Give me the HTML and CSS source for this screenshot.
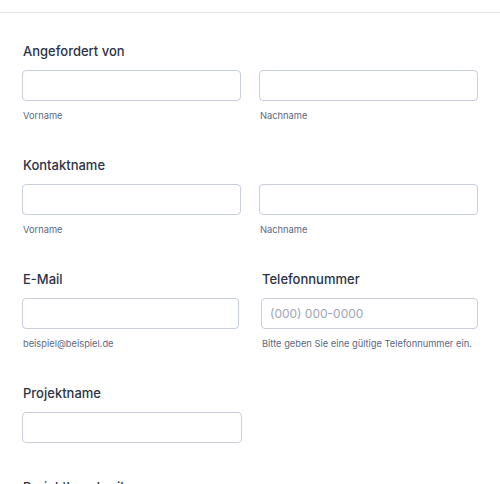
FILE: index.html
```html
<!DOCTYPE html>
<html lang="de">
<head>
<meta charset="utf-8">
<link rel="stylesheet" href="styles.css">
</head>
<body>
<div class="header-line"></div>
<form class="form">
  <div class="field">
    <div class="label">Angefordert von</div>
    <div class="row">
      <div class="col"><input class="input" type="text"><div class="sub">Vorname</div></div>
      <div class="col"><input class="input" type="text"><div class="sub">Nachname</div></div>
    </div>
  </div>
  <div class="field">
    <div class="label">Kontaktname</div>
    <div class="row">
      <div class="col"><input class="input" type="text"><div class="sub">Vorname</div></div>
      <div class="col"><input class="input" type="text"><div class="sub">Nachname</div></div>
    </div>
  </div>
  <div class="row row-wide">
    <div class="col">
      <div class="label">E-Mail</div>
      <input class="input" type="text">
      <div class="sub">beispiel@beispiel.de</div>
    </div>
    <div class="col">
      <div class="label">Telefonnummer</div>
      <input class="input" type="text" placeholder="(000) 000-0000">
      <div class="sub">Bitte geben Sie eine gültige Telefonnummer ein.</div>
    </div>
  </div>
  <div class="field field-single">
    <div class="label">Projektname</div>
    <input class="input input-half" type="text">
  </div>
  <div class="field">
    <div class="label">Projektbeschreibung</div>
  </div>
</form>
</body>
</html>
```
FILE: styles.css
```css
html, body {
  margin: 0;
  padding: 0;
  background: #ffffff;
  font-family: Inter, "Noto Sans", sans-serif;
  color: #2c3345;
}
.header-line {
  height: 12px;
  border-bottom: 1px solid #e1e2ea;
}
.form {
  padding: 28px 22px 0 22px;
}
.field {
  margin-bottom: 32px;
}
.row {
  display: grid;
  grid-template-columns: 1fr 1fr;
  column-gap: 18px;
}
.row-wide {
  column-gap: 22px;
  margin-bottom: 32px;
}
.label {
  font-size: 13px;
  line-height: 20px;
  font-weight: 450;
  color: #2c3345;
  margin-bottom: 9px;
  padding-left: 1px;
}
.input {
  display: block;
  box-sizing: border-box;
  width: 100%;
  height: 31px;
  margin: 0;
  border: 1px solid #c9cedb;
  border-radius: 4px;
  background: #fff;
  padding: 0 8px;
  font-family: Inter, "Noto Sans", sans-serif;
  font-size: 12px;
  color: #2c3345;
  outline: none;
}
.input::placeholder {
  color: #a0a4b8;
}
.input-half {
  width: 220px;
}
.field-single {
  margin-bottom: 34px;
}
.sub {
  font-size: 9.3px;
  line-height: 14px;
  color: #5d6881;
  margin-top: 8px;
  padding-left: 1px;
}
```
